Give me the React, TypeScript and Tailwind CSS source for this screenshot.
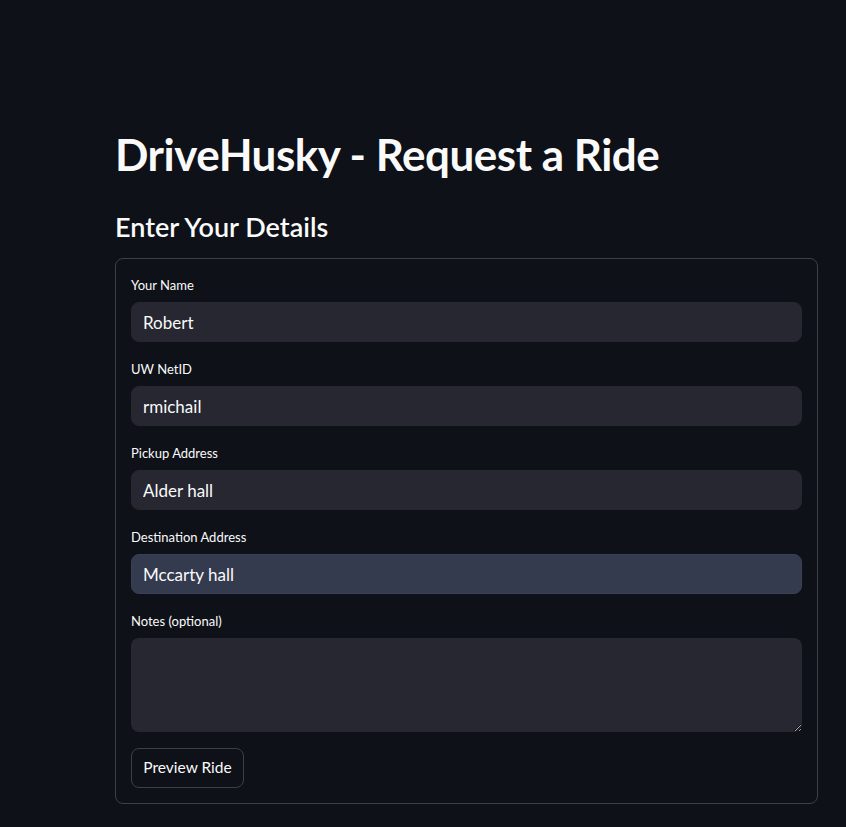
import React from 'react';

const fields = [
  { label: 'Your Name', value: 'Robert' },
  { label: 'UW NetID', value: 'rmichail' },
  { label: 'Pickup Address', value: 'Alder hall' },
  { label: 'Destination Address', value: 'Mccarty hall', focused: true },
];

const font = { fontFamily: 'Lato, "Noto Sans", sans-serif' };

export default function App() {
  return (
    <div className="min-h-[827px] bg-[#0e1117] text-[#fafafa]" style={font}>
      <div className="ml-[115px] w-[703px] pt-[126px]">
        <h1 className="text-[44px] font-bold leading-[56px] tracking-[-0.5px]">DriveHusky - Request a Ride</h1>
        <h3 className="mt-[27px] text-[27px] font-semibold leading-[36px]">Enter Your Details</h3>

        <div className="mt-[13px] rounded-lg border border-[#3d4047] px-[15px] pt-[18px] pb-[15px]">
          {fields.map((f) => (
            <div key={f.label} className="mb-[19px]">
              <div className="text-[13px] leading-[16px] mb-[9px]">{f.label}</div>
              <input
                readOnly
                value={f.value}
                className={`w-full h-[40px] rounded-lg px-[11px] text-[17px] text-[#fafafa] outline-none border ${
                  f.focused ? 'bg-[#343b4f] border-[#3a4154]' : 'bg-[#262730] border-[#262730]'
                }`}
                style={font}
              />
            </div>
          ))}
          <div className="mb-[16px]">
            <div className="text-[13px] leading-[16px] mb-[9px]">Notes (optional)</div>
            <textarea className="block w-full h-[94px] rounded-lg bg-[#262730] outline-none" />
          </div>
          <button className="h-[40px] w-[113px] rounded-lg border border-[#3d4047] bg-[#0e1117] text-[15.5px] text-[#fafafa]" style={font}>
            Preview Ride
          </button>
        </div>
      </div>
    </div>
  );
}
